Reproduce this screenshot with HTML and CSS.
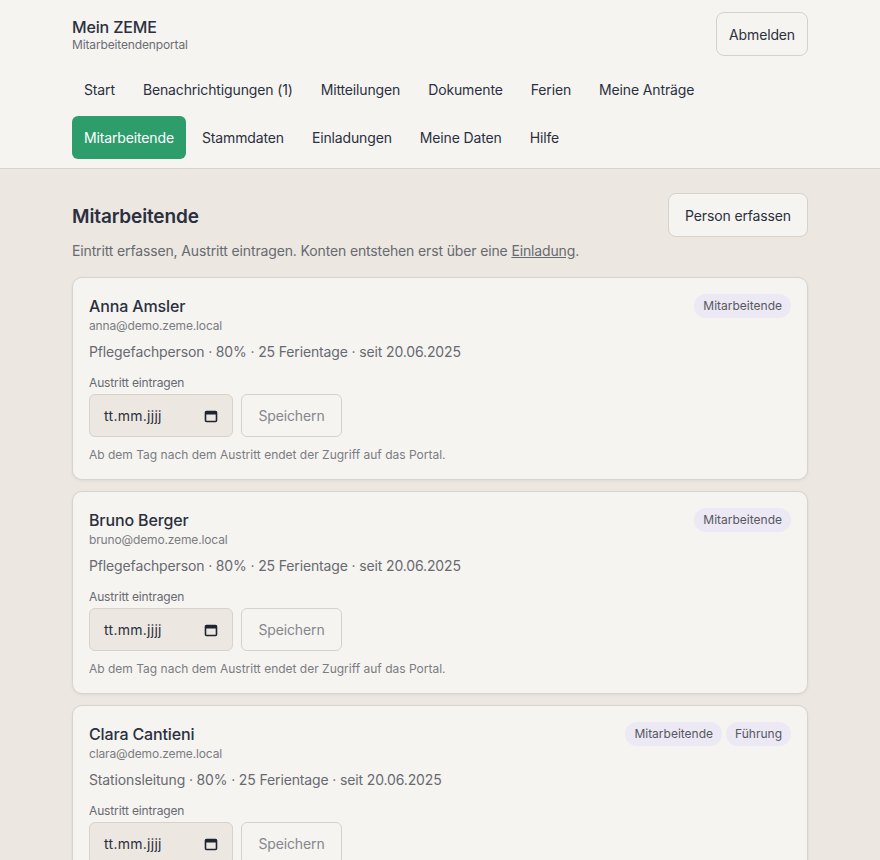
FILE: index.html
```html
<!DOCTYPE html>
<html lang="de">
    <head>
        <title>Mein ZEME – Mitarbeitende</title>
        <meta charset="utf-8">
        <meta name="viewport" content="width=device-width, initial-scale=1">
        <link rel="stylesheet" href="styles.css">
    </head>
    <body>
        <header class="top-bar">
            <div class="wrap">
                <div class="brand-row">
                    <div class="brand">
                        <div class="brand-title">Mein ZEME</div>
                        <div class="brand-sub">Mitarbeitendenportal</div>
                    </div>
                    <button class="btn">Abmelden</button>
                </div>
                <nav class="nav">
                    <a href="#" class="nav-link">Start</a>
                    <a href="#" class="nav-link">Benachrichtigungen (1)</a>
                    <a href="#" class="nav-link">Mitteilungen</a>
                    <a href="#" class="nav-link">Dokumente</a>
                    <a href="#" class="nav-link">Ferien</a>
                    <a href="#" class="nav-link">Meine Anträge</a>
                    <a href="#" class="nav-link active">Mitarbeitende</a>
                    <a href="#" class="nav-link">Stammdaten</a>
                    <a href="#" class="nav-link">Einladungen</a>
                    <a href="#" class="nav-link">Meine Daten</a>
                    <a href="#" class="nav-link">Hilfe</a>
                </nav>
            </div>
        </header>

        <main class="wrap content">
            <div class="page-head">
                <h1>Mitarbeitende</h1>
                <button class="btn btn-wide">Person erfassen</button>
            </div>
            <p class="lead">Eintritt erfassen, Austritt eintragen. Konten entstehen erst über eine <a href="#">Einladung</a>.</p>

            <div class="card">
                <div class="card-head">
                    <div>
                        <div class="name">Anna Amsler</div>
                        <div class="mail">anna@demo.zeme.local</div>
                    </div>
                    <div class="badges"><span class="badge">Mitarbeitende</span></div>
                </div>
                <div class="meta">Pflegefachperson · 80% · 25 Ferientage · seit 20.06.2025</div>
                <div class="field-label">Austritt eintragen</div>
                <div class="form-row">
                    <div class="date-input">
                        <span>tt.mm.jjjj</span>
                        <svg width="14" height="14" viewBox="0 0 14 14"><rect x="1.5" y="2.5" width="11" height="10" rx="1" fill="none" stroke="#1f2430" stroke-width="1.6"/><rect x="1.5" y="2.5" width="11" height="3" fill="#1f2430"/></svg>
                    </div>
                    <button class="btn btn-muted">Speichern</button>
                </div>
                <div class="hint">Ab dem Tag nach dem Austritt endet der Zugriff auf das Portal.</div>
            </div>

            <div class="card">
                <div class="card-head">
                    <div>
                        <div class="name">Bruno Berger</div>
                        <div class="mail">bruno@demo.zeme.local</div>
                    </div>
                    <div class="badges"><span class="badge">Mitarbeitende</span></div>
                </div>
                <div class="meta">Pflegefachperson · 80% · 25 Ferientage · seit 20.06.2025</div>
                <div class="field-label">Austritt eintragen</div>
                <div class="form-row">
                    <div class="date-input">
                        <span>tt.mm.jjjj</span>
                        <svg width="14" height="14" viewBox="0 0 14 14"><rect x="1.5" y="2.5" width="11" height="10" rx="1" fill="none" stroke="#1f2430" stroke-width="1.6"/><rect x="1.5" y="2.5" width="11" height="3" fill="#1f2430"/></svg>
                    </div>
                    <button class="btn btn-muted">Speichern</button>
                </div>
                <div class="hint">Ab dem Tag nach dem Austritt endet der Zugriff auf das Portal.</div>
            </div>

            <div class="card">
                <div class="card-head">
                    <div>
                        <div class="name">Clara Cantieni</div>
                        <div class="mail">clara@demo.zeme.local</div>
                    </div>
                    <div class="badges"><span class="badge">Mitarbeitende</span><span class="badge">Führung</span></div>
                </div>
                <div class="meta">Stationsleitung · 80% · 25 Ferientage · seit 20.06.2025</div>
                <div class="field-label">Austritt eintragen</div>
                <div class="form-row">
                    <div class="date-input">
                        <span>tt.mm.jjjj</span>
                        <svg width="14" height="14" viewBox="0 0 14 14"><rect x="1.5" y="2.5" width="11" height="10" rx="1" fill="none" stroke="#1f2430" stroke-width="1.6"/><rect x="1.5" y="2.5" width="11" height="3" fill="#1f2430"/></svg>
                    </div>
                    <button class="btn btn-muted">Speichern</button>
                </div>
                <div class="hint">Ab dem Tag nach dem Austritt endet der Zugriff auf das Portal.</div>
            </div>
        </main>
    </body>
</html>
```

FILE: styles.css
```css
body {
    margin: 0;
    font-family: Inter, "Noto Sans", sans-serif;
    font-size: 14px;
    letter-spacing: -0.01em;
    color: #2a3040;
    background: #ece7e1;
}

.wrap {
    width: 736px;
    margin: 0 auto;
}

.top-bar {
    background: #f6f4f1;
    border-bottom: 1px solid #d8d3cc;
    padding: 12px 0 9px;
}

.brand-row {
    display: flex;
    justify-content: space-between;
    align-items: center;
}

.brand-title {
    font-size: 16px;
    font-weight: 500;
    line-height: 20px;
    margin-top: 1px;
}

.brand-sub {
    font-size: 12px;
    line-height: 16px;
    color: #6b6d73;
}

.btn {
    font-family: inherit;
    font-size: 14px;
    letter-spacing: inherit;
    color: #2a3040;
    height: 44px;
    padding: 0 12px;
    border: 1px solid #d6d1ca;
    border-radius: 8px;
    background: #f6f4f1;
    cursor: pointer;
}

.btn-wide {
    padding: 0 16px;
}

.nav {
    display: flex;
    flex-wrap: wrap;
    column-gap: 4px;
    row-gap: 5px;
    margin-top: 12px;
}

.nav-link {
    display: block;
    padding: 12px 12px;
    line-height: 19px;
    border-radius: 6px;
    color: #2a3040;
    text-decoration: none;
}

.nav-link.active {
    background: #2d9d6c;
    color: #fff;
}

.content {
    padding-top: 24px;
}

.page-head {
    display: flex;
    justify-content: space-between;
    align-items: center;
}

.page-head h1 {
    margin: 0;
    font-size: 19px;
    font-weight: 600;
    margin-top: 2px;
}

.lead {
    margin: 4px 0 16px;
    line-height: 20px;
    color: #676a70;
}

.lead a {
    color: #676a70;
}

.card {
    background: #f6f4f1;
    border: 1px solid #d8d3cc;
    border-radius: 10px;
    box-shadow: 0 1px 3px rgba(60, 50, 40, 0.08);
    padding: 16px;
    margin-bottom: 11px;
}

.card-head {
    display: flex;
    justify-content: space-between;
    align-items: flex-start;
}

.name {
    font-size: 16px;
    font-weight: 500;
    line-height: 24px;
}

.mail {
    font-size: 12px;
    line-height: 16px;
    color: #7a7c81;
}

.badges {
    display: flex;
    gap: 4px;
}

.badge {
    font-size: 12px;
    line-height: 16px;
    letter-spacing: 0;
    padding: 4px 9px;
    border-radius: 12px;
    background: #ece8f4;
    color: #55585f;
}

.meta {
    margin-top: 8px;
    line-height: 20px;
    color: #676a70;
}

.field-label {
    margin-top: 13px;
    font-size: 12px;
    line-height: 16px;
    color: #676a70;
}

.form-row {
    display: flex;
    gap: 8px;
    margin-top: 3px;
}

.date-input {
    width: 144px;
    height: 43px;
    box-sizing: border-box;
    display: flex;
    align-items: center;
    justify-content: space-between;
    padding: 0 14px;
    border: 1px solid #d6d1ca;
    border-radius: 6px;
    background: #ece7e1;
    color: #2a3040;
    letter-spacing: 0.02em;
}

.date-input svg {
    margin-top: 1px;
}

.btn-muted {
    height: 43px;
    width: 101px;
    border-radius: 6px;
    color: #85878c;
}

.hint {
    margin-top: 9px;
    font-size: 12px;
    line-height: 17px;
    letter-spacing: 0;
    color: #7a7c81;
}
```
